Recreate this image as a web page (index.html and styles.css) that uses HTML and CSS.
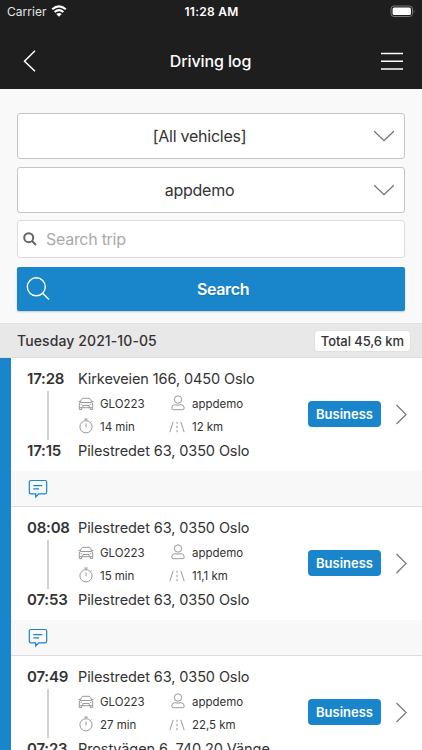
FILE: index.html
```html
<!DOCTYPE html>
<html lang="en">
<head>
<meta charset="utf-8">
<meta name="viewport" content="width=device-width, initial-scale=1">
<title>Driving log</title>
<link rel="stylesheet" href="styles.css">
</head>
<body>
<svg class="sprite" aria-hidden="true">
  <symbol id="car" viewBox="0 0 16 14"><path d="M2.200 5.500 3.500 2.200Q3.900 1.300 4.800 1.300h6.400q.9 0 1.300.9l1.300 3.300M2.800 5.500h10.400q1.500 0 1.500 1.500v3.700H1.300V7q0-1.500 1.500-1.500ZM1.300 10.700v1.800h2.400v-1.800M12.300 10.700v1.800h2.400v-1.800M.5 4.400h1.800M13.700 4.400h1.800M4.800 10.700V8.500h6.400v2.200M2.600 7.600h1.200M12.200 7.600h1.200"/></symbol>
  <symbol id="person" viewBox="0 0 14 16"><circle cx="7" cy="4.500" r="3.700"/><path d="M3.800 9.700q3.200.8 6.400 0 3 .3 3 3.200 0 1.800-1.400 1.800H2.200q-1.400 0-1.400-1.800 0-2.900 3-3.200Z"/></symbol>
  <symbol id="watch" viewBox="0 0 14 16"><circle cx="7" cy="8.800" r="6.100"/><path d="M7 5.500v3.800M7 2.700V1M5.300 1h3.400M11.500 4.500l1-1"/></symbol>
  <symbol id="road" viewBox="0 0 16 12"><path d="M4.200.8.8 11.200M11.800.8l3.400 10.400M8 .8v2M8 4.700v2.600M8 9v2.200"/></symbol>
  <symbol id="comment" viewBox="0 0 20 20"><path d="M3 1.500h14q1.700 0 1.700 1.700v9.900q0 1.700-1.700 1.700h-6.200L7.700 18v-3.200H3q-1.700 0-1.700-1.700V3.200Q1.300 1.500 3 1.500ZM5.300 6.600h9M5.300 9.800H11"/></symbol>
  <symbol id="next" viewBox="0 0 12 22"><path d="m1.500 1 9.600 9.500L1.500 20"/></symbol>
  <symbol id="down" viewBox="0 0 22 12"><path d="m1.200 1.300 9.800 9.400 9.800-9.400"/></symbol>
</svg>

<header class="top">
  <div class="status">
    <div class="carrier">Carrier
      <svg class="wifi" viewBox="0 0 16 12"><path d="M1.200 4.300q6.800-5.800 13.600 0M3.600 6.900q4.400-3.600 8.800 0"/><path class="dot" d="M5.300 9q2.700-2 5.400 0L8 11.700Z"/></svg>
    </div>
    <div class="clock">11:28 AM</div>
    <svg class="battery" viewBox="0 0 26 13"><rect class="case" x="1" y="1" width="21.500" height="10.500" rx="3"/><rect class="charge" x="2.600" y="2.500" width="18.300" height="7.500" rx="1.500"/><path class="tip" d="M23.800 4.500q1.400 1.700 0 3.500Z"/></svg>
  </div>
  <nav class="nav">
    <svg class="back" viewBox="0 0 13 22"><path d="M12 .8 1.500 11.200 12 21.300"/></svg>
    <h1>Driving log</h1>
    <svg class="menu" viewBox="0 0 22 18"><path d="M0 1.500h22M0 9.300h22M0 17h22"/></svg>
  </nav>
</header>

<form class="filters">
  <div class="select"><span>[All vehicles]</span><svg class="down"><use href="#down"/></svg></div>
  <div class="select"><span>appdemo</span><svg class="down"><use href="#down"/></svg></div>
  <div class="field"><svg class="mag-small" viewBox="0 0 14 14"><circle cx="5.700" cy="5.700" r="4.500"/><path d="m9 9 4 4"/></svg><span>Search trip</span></div>
  <div class="submit"><svg class="mag" viewBox="0 0 24 24"><circle cx="10.300" cy="9.800" r="9"/><path d="m16.600 16.200 6.400 6.300"/></svg><span>Search</span></div>
</form>

<div class="day"><span class="date">Tuesday 2021-10-05</span><span class="total">Total 45,6 km</span></div>

<main class="trips">
  <article class="trip">
    <div class="body">
      <div class="times"><time>17:28</time><i></i><time>17:15</time></div>
      <div class="route">
        <p>Kirkeveien 166, 0450 Oslo</p>
        <div class="facts">
          <span><svg class="car"><use href="#car"/></svg>GLO223</span><span><svg class="person"><use href="#person"/></svg>appdemo</span>
          <span><svg class="watch"><use href="#watch"/></svg>14 min</span><span><svg class="road"><use href="#road"/></svg>12 km</span>
        </div>
        <p>Pilestredet 63, 0350 Oslo</p>
      </div>
      <span class="tag">Business</span><svg class="next"><use href="#next"/></svg>
    </div>
    <div class="note"><svg class="comment"><use href="#comment"/></svg></div>
  </article>
  <article class="trip">
    <div class="body">
      <div class="times"><time>08:08</time><i></i><time>07:53</time></div>
      <div class="route">
        <p>Pilestredet 63, 0350 Oslo</p>
        <div class="facts">
          <span><svg class="car"><use href="#car"/></svg>GLO223</span><span><svg class="person"><use href="#person"/></svg>appdemo</span>
          <span><svg class="watch"><use href="#watch"/></svg>15 min</span><span><svg class="road"><use href="#road"/></svg>11,1 km</span>
        </div>
        <p>Pilestredet 63, 0350 Oslo</p>
      </div>
      <span class="tag">Business</span><svg class="next"><use href="#next"/></svg>
    </div>
    <div class="note"><svg class="comment"><use href="#comment"/></svg></div>
  </article>
  <article class="trip">
    <div class="body">
      <div class="times"><time>07:49</time><i></i><time>07:23</time></div>
      <div class="route">
        <p>Pilestredet 63, 0350 Oslo</p>
        <div class="facts">
          <span><svg class="car"><use href="#car"/></svg>GLO223</span><span><svg class="person"><use href="#person"/></svg>appdemo</span>
          <span><svg class="watch"><use href="#watch"/></svg>27 min</span><span><svg class="road"><use href="#road"/></svg>22,5 km</span>
        </div>
        <p>Prostvägen 6, 740 20 Vänge</p>
      </div>
      <span class="tag">Business</span><svg class="next"><use href="#next"/></svg>
    </div>
  </article>
</main>
</body>
</html>
```
FILE: styles.css
```css
* { box-sizing: border-box; }
html, body { height: 100%; }
body {
  margin: 0;
  height: 750px;
  overflow: hidden;
  display: flex;
  flex-direction: column;
  background: #f9f9f9;
  color: #333;
  font-family: Inter, "Liberation Sans", sans-serif;
  font-size: 15px;
}
svg { fill: none; stroke: currentColor; flex: none; display: block; }
.sprite { display: none; }

.top { height: 89px; flex: none; background: #1e1e1e; color: #fff; }
.status { height: 22px; display: grid; grid-template-columns: 1fr auto 1fr; align-items: center; padding: 0 6px 0 7px; }
.carrier { display: flex; align-items: center; gap: 4px; font-size: 12px; letter-spacing: .05px; color: #e4e4e4; }
.wifi { width: 16px; height: 12px; margin-bottom: 1px; stroke: #fff; stroke-width: 2; }
.wifi .dot { fill: #fff; stroke: none; }
.clock { font-size: 12px; font-weight: 600; letter-spacing: .25px; }
.battery { width: 26px; height: 13px; justify-self: end; }
.case { stroke: #777; }
.charge { fill: #fff; stroke: none; }
.tip { fill: #888; stroke: none; }
.nav { height: 67px; display: grid; grid-template-columns: 1fr auto 1fr; align-items: center; padding: 11px 19px 0 18px; }
.nav h1 { margin: 0; font-size: 16px; font-weight: 500; letter-spacing: -.1px; }
.back { width: 13px; height: 22px; margin-left: 5px; stroke-width: 1.5; }
.menu { width: 22px; height: 18px; stroke-width: 1.5; justify-self: end; }

.filters { height: 234px; flex: none; padding: 24px 17px 0; display: flex; flex-direction: column; }
.select { height: 46px; margin-bottom: 7.5px; border: 1px solid #c5c5c5; border-bottom-width: 1.5px; border-radius: 3px; background: #fff; display: flex; align-items: center; font-size: 16px; padding: 0 9px 0 8px; letter-spacing: -.25px; }
.select span { flex: 1; text-align: center; }
.down { width: 22px; height: 12px; color: #707070; stroke-width: 1.2; }
.field { height: 38px; margin-bottom: 8.6px; border: 1px solid #ddd; border-radius: 3px; background: #fff; display: flex; align-items: center; gap: 9px; padding-left: 5px; color: #aaa; font-size: 16px; letter-spacing: -.28px; }
.mag-small { width: 14px; height: 14px; color: #666; stroke-width: 2; }
.submit { height: 44px; border-radius: 2px; background: #1985ca; color: #fff; box-shadow: 0 1px 2px #0003; display: flex; align-items: center; padding: 0 9px; font-size: 16px; font-weight: 600; letter-spacing: -.35px; text-shadow: 0 1px 1px #0002; }
.submit span { flex: 1; text-align: center; }
.mag { width: 24px; height: 24px; stroke-width: 1.4; }

.day { height: 35px; flex: none; border-top: 1px solid #e1e1e1; border-bottom: 1px solid #dedede; background: #e8e8e8; display: flex; align-items: center; justify-content: space-between; padding: 0 11px 0 17px; }
.date { font-size: 14px; font-weight: 500; letter-spacing: .1px; }
.total { height: 22px; padding: 0 6px; display: flex; align-items: center; border: 1px solid #e0e0e0; border-radius: 4px; background: #fff; font-size: 13px; font-weight: 500; letter-spacing: -.08px; }

.trips { flex: 1; min-height: 0; overflow: hidden; border-left: 11px solid #1985ca; background: #fff; }
.trip { height: 149px; border-bottom: 1px solid #ddd; }
.body { height: 113px; display: flex; align-items: center; padding-right: 15px; }
.times { width: 67px; height: 113px; padding: 11px 0 0 16px; font-weight: 600; letter-spacing: -.2px; }
.times time { display: block; height: 20px; line-height: 20px; }
.times i { display: block; width: 2px; height: 49px; margin: 2px 0 1px 20px; background: #d2d2d2; }
.route { flex: 1; height: 113px; padding-top: 11px; }
.route p { margin: 0; height: 20px; line-height: 20px; white-space: nowrap; font-size: 14.5px; letter-spacing: -.1px; }
.facts { display: grid; grid-template-columns: 91px 110px; grid-template-rows: 23px 23px; height: 52px; padding-top: 3px; font-size: 11.5px; letter-spacing: -.03px; }
.facts span { display: flex; align-items: center; }
.facts svg { color: #999; stroke-width: 1; }
.car { width: 16px; height: 14px; margin-right: 6px; }
.person { width: 14px; height: 16px; margin: 0 7px 2px 2px; }
.watch { width: 14px; height: 16px; margin: 0 7px 1px 1px; }
.road { width: 16px; height: 12px; margin-right: 7px; }
.tag { width: 73px; height: 26px; margin: 0 14px 2px 0; display: flex; align-items: center; justify-content: center; border-radius: 4px; background: #1985ca; color: #fff; font-size: 13px; font-weight: 600; }
.next { width: 12px; height: 22px; color: #777; stroke-width: 1.2; }
.note { height: 35px; padding: 8px 0 0 17px; background: #f8f8f8; color: #1985ca; }
.comment { width: 20px; height: 20px; stroke-width: 1.2; }
```
